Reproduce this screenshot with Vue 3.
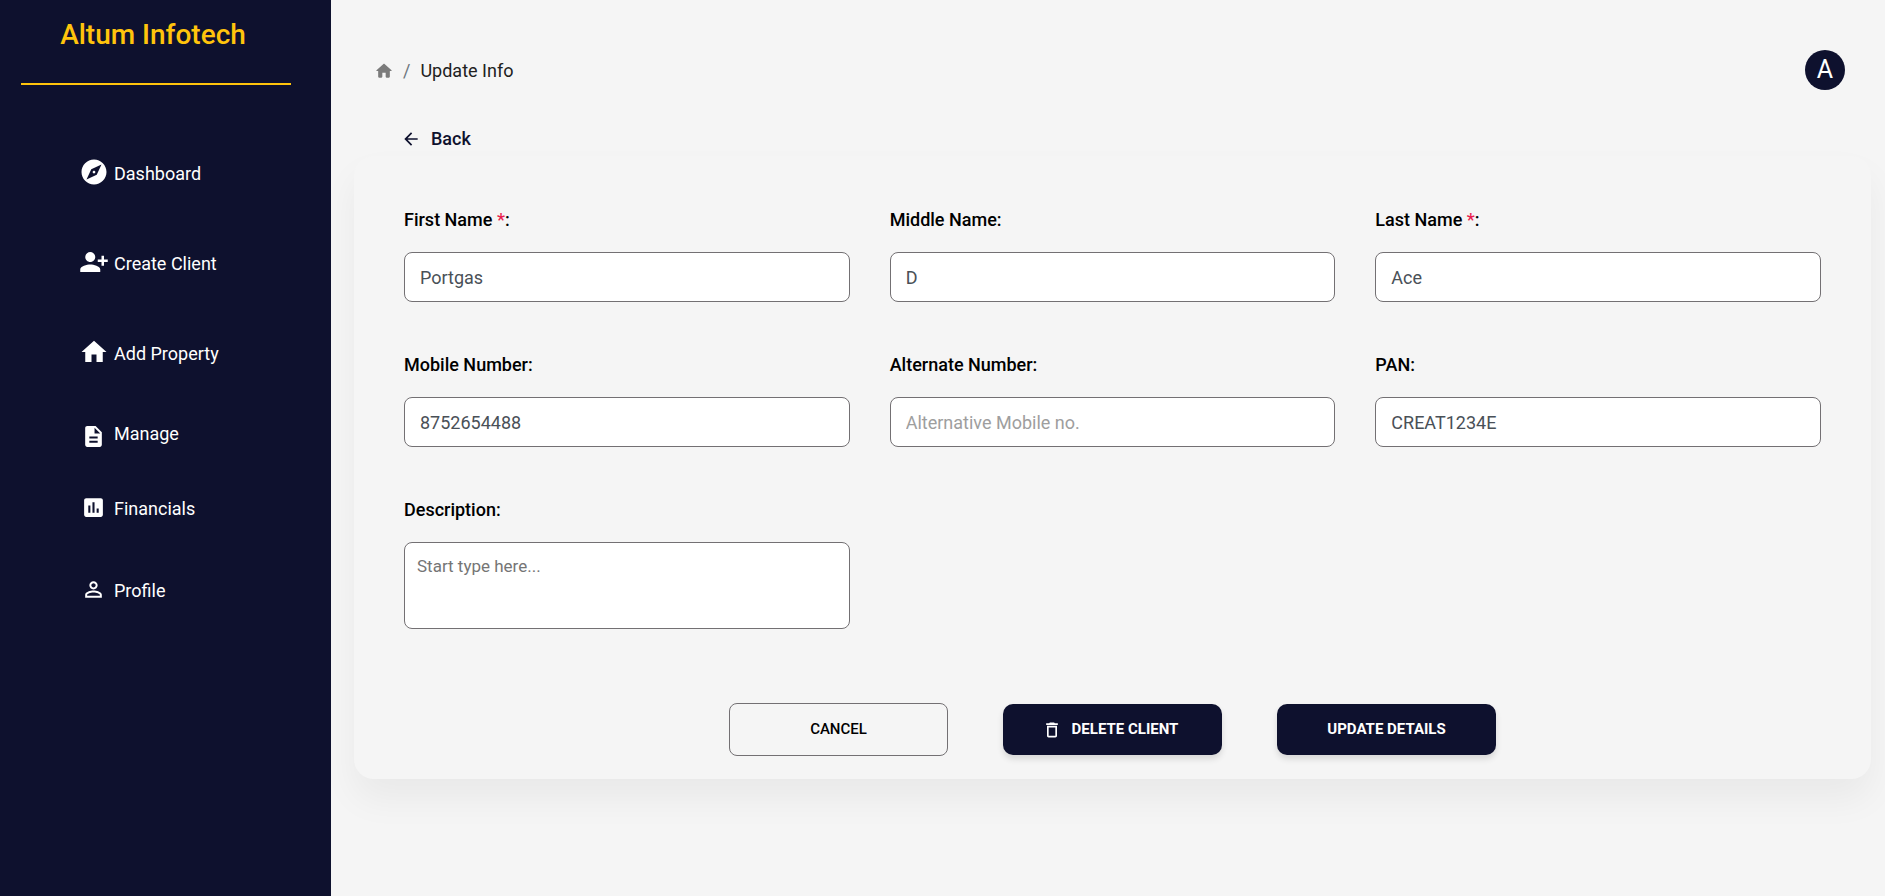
<script setup>
import { ref } from 'vue'

const navItems = [
  {
    label: 'Dashboard', size: 'large', gap: 'wide',
    icon: 'M12 10.9c-.61 0-1.1.49-1.1 1.1s.49 1.1 1.1 1.1c.61 0 1.1-.49 1.1-1.1s-.49-1.1-1.1-1.1zM12 2C6.48 2 2 6.48 2 12s4.48 10 10 10 10-4.48 10-10S17.52 2 12 2zm2.19 12.19L6 18l3.81-8.19L18 6l-3.81 8.19z',
  },
  {
    label: 'Create Client', size: 'large', gap: 'wide',
    icon: 'M13 8c0-2.21-1.79-4-4-4S5 5.79 5 8s1.79 4 4 4 4-1.79 4-4zm2 2v2h3v3h2v-3h3v-2h-3V7h-2v3h-3zM1 18v2h16v-2c0-2.66-5.33-4-8-4s-8 1.34-8 4z',
  },
  {
    label: 'Add Property', size: 'large', gap: 'medium',
    icon: 'M10 20v-6h4v6h5v-8h3L12 3 2 12h3v8z',
  },
  {
    label: 'Manage', size: 'small', gap: 'narrow', low: true,
    icon: 'M14 2H6c-1.1 0-1.99.9-1.99 2L4 20c0 1.1.89 2 1.99 2H18c1.1 0 2-.9 2-2V8l-6-6zm2 16H8v-2h8v2zm0-4H8v-2h8v2zm-3-5V3.5L18.5 9H13z',
  },
  {
    label: 'Financials', size: 'small', gap: 'loose',
    icon: 'M19 3H5c-1.1 0-2 .9-2 2v14c0 1.1.9 2 2 2h14c1.1 0 2-.9 2-2V5c0-1.1-.9-2-2-2zM9 17H7v-7h2v7zm4 0h-2V7h2v10zm4 0h-2v-4h2v4z',
  },
  {
    label: 'Profile', size: 'small', gap: 'medium',
    icon: 'M12 5.9c1.16 0 2.1.94 2.1 2.1s-.94 2.1-2.1 2.1S9.9 9.16 9.9 8s.94-2.1 2.1-2.1m0 9c2.97 0 6.1 1.46 6.1 2.1v1.1H5.9V17c0-.64 3.13-2.1 6.1-2.1M12 4C9.79 4 8 5.79 8 8s1.79 4 4 4 4-1.79 4-4-1.79-4-4-4zm0 9c-2.67 0-8 1.34-8 4v3h16v-3c0-2.66-5.33-4-8-4z',
  },
]

const fields = ref([
  { id: 'first-name', label: 'First Name', required: true, value: 'Portgas' },
  { id: 'middle-name', label: 'Middle Name', value: 'D' },
  { id: 'last-name', label: 'Last Name', required: true, value: 'Ace' },
  { id: 'mobile', label: 'Mobile Number', value: '8752654488' },
  { id: 'alternate', label: 'Alternate Number', value: '', placeholder: 'Alternative Mobile no.' },
  { id: 'pan', label: 'PAN', value: 'CREAT1234E' },
])
const description = ref('')
</script>

<template>
  <div class="layout">
    <aside class="sidebar">
      <h1 class="brand">Altum Infotech</h1>
      <hr class="rule" />
      <nav>
        <ul class="nav">
          <li v-for="item in navItems" :key="item.label" :class="item.gap">
            <a href="#" class="nav-link" :class="{ low: item.low }">
              <span class="nav-icon">
                <svg :class="item.size" viewBox="0 0 24 24" aria-hidden="true"><path :d="item.icon" /></svg>
              </span>
              <span class="nav-text">{{ item.label }}</span>
            </a>
          </li>
        </ul>
      </nav>
    </aside>

    <main class="main">
      <header class="topbar">
        <nav class="crumbs" aria-label="Breadcrumb">
          <a href="#" aria-label="Home" class="crumb-home">
            <svg viewBox="0 0 24 24" aria-hidden="true">
              <path d="M10 19v-5h4v5c0 .55.45 1 1 1h3c.55 0 1-.45 1-1v-7h1.7c.46 0 .68-.57.33-.87L12.67 3.6c-.38-.34-.96-.34-1.34 0l-8.36 7.53c-.34.3-.13.87.33.87H5v7c0 .55.45 1 1 1h3c.55 0 1-.45 1-1z" />
            </svg>
          </a>
          <span class="slash">/</span>
          <span>Update Info</span>
        </nav>
        <button type="button" class="avatar">A</button>
      </header>

      <a href="#" class="back">
        <svg viewBox="0 0 24 24" aria-hidden="true">
          <path d="M20 11H7.83l5.59-5.59L12 4l-8 8 8 8 1.41-1.41L7.83 13H20v-2z" />
        </svg>
        <span>Back</span>
      </a>

      <form class="card" @submit.prevent>
        <div class="fields">
          <div v-for="field in fields" :key="field.id" class="field">
            <label :for="field.id">{{ field.label }}<template v-if="field.required">&nbsp;<span class="star">*</span></template>:</label>
            <input :id="field.id" v-model="field.value" type="text" :placeholder="field.placeholder" />
          </div>
          <div class="field">
            <label for="description">Description:</label>
            <textarea id="description" v-model="description" placeholder="Start type here..."></textarea>
          </div>
        </div>
        <div class="actions">
          <button type="button" class="btn outline">CANCEL</button>
          <button type="button" class="btn solid with-icon">
            <svg viewBox="0 0 24 24" aria-hidden="true">
              <path d="M6 19c0 1.1.9 2 2 2h8c1.1 0 2-.9 2-2V7H6v12zM8 9h8v10H8V9zm7.5-5-1-1h-5l-1 1H5v2h14V4z" />
            </svg>
            <span>DELETE CLIENT</span>
          </button>
          <button type="submit" class="btn solid">UPDATE DETAILS</button>
        </div>
      </form>
    </main>
  </div>
</template>

<style>
body {
  margin: 0;
  background: #f5f5f5;
}
</style>

<style scoped>
.layout {
  display: flex;
  min-height: 100vh;
  font-family: Roboto, "Liberation Sans", sans-serif;
  font-size: 18px;
  line-height: 24px;
  color: #212121;
}

.layout * {
  box-sizing: border-box;
}

svg {
  display: block;
  fill: currentColor;
}

a {
  color: inherit;
  text-decoration: none;
}

.sidebar {
  position: relative;
  z-index: 1;
  flex: 0 0 331px;
  background: #0e112e;
  color: #fff;
}

.brand {
  margin: 16px 25px 0 0;
  padding-top: 3px;
  text-align: center;
  font-size: 28px;
  line-height: 32px;
  font-weight: 500;
  color: #ffc40c;
}

.rule {
  height: 2px;
  margin: 32px 40px 0 21px;
  border: 0;
  background: #ffc40c;
}

.nav {
  list-style: none;
  margin: 72px 0 0;
  padding: 0 0 0 79px;
}

.nav-link {
  display: flex;
  align-items: center;
  gap: 5px;
  height: 30px;
}

.nav-text {
  padding-top: 4px;
}

.wide {
  margin-bottom: 60px;
}

.loose {
  margin-bottom: 52px;
}

.medium {
  margin-bottom: 50px;
}

.narrow {
  margin-bottom: 45px;
}

.nav-icon {
  display: flex;
  flex: 0 0 30px;
  justify-content: center;
}

.low .nav-icon {
  padding-top: 8px;
}

.large {
  width: 30px;
  height: 30px;
}

.small {
  width: 25px;
  height: 25px;
  margin-right: 1px;
}

.main {
  flex: 1;
  min-width: 0;
  padding: 50px 14px 0 23px;
}

.topbar {
  display: flex;
  align-items: center;
  justify-content: space-between;
  padding: 0 26px 0 20px;
}

.crumbs {
  display: flex;
  align-items: center;
  padding-top: 1px;
}

.crumb-home {
  color: #7b7b7b;
}

.crumb-home svg {
  width: 20px;
  height: 20px;
}

.slash {
  margin: 0 10px 0 9px;
  color: #6c757d;
}

.avatar {
  width: 40px;
  height: 40px;
  padding: 0;
  border: 0;
  border-radius: 50%;
  background: #0e112e;
  color: #fff;
  font: 400 25px/40px Roboto, "Liberation Sans", sans-serif;
}

.back {
  display: inline-flex;
  align-items: center;
  gap: 10px;
  margin: 37px 0 0 47px;
  font-weight: 500;
  color: #0e112e;
  vertical-align: top;
}

.back svg {
  width: 20px;
  height: 20px;
}

.card {
  margin-top: 5px;
  padding: 52px 50px 23px;
  border-radius: 20px;
  background: #f5f5f5;
  box-shadow: 0 20px 36px rgba(0, 0, 0, 0.05);
}

.fields {
  display: grid;
  grid-template-columns: repeat(3, minmax(0, 1fr));
  gap: 51px 40px;
}

.field {
  display: flex;
  flex-direction: column;
  gap: 20px;
}

label {
  font-weight: 500;
  color: #000;
}

.star {
  color: #e91e4f;
}

input,
textarea {
  display: block;
  width: 100%;
  border: 1px solid #737073;
  border-radius: 8px;
  background: #fff;
  color: #495057;
  font-family: inherit;
}

input {
  height: 50px;
  padding: 0 15px;
  font-size: 18px;
}

input::placeholder {
  color: #9e9e9e;
}

textarea {
  height: 87px;
  padding: 11px 12px;
  font-size: 17px;
  line-height: 24px;
  resize: none;
}

textarea::placeholder {
  color: #757575;
}

.actions {
  display: flex;
  align-items: center;
  justify-content: center;
  gap: 55px;
  margin-top: 74px;
}

.btn {
  display: flex;
  align-items: center;
  justify-content: center;
  gap: 10px;
  width: 219px;
  height: 51px;
  padding: 0 0 2px;
  border: 0;
  border-radius: 10px;
  font-family: inherit;
  font-size: 15px;
  line-height: 20px;
}

.btn svg {
  width: 20px;
  height: 20px;
  margin-top: 2px;
}

.outline {
  height: 53px;
  border: 1px solid #737073;
  border-radius: 8px;
  background: transparent;
  color: #000;
  font-weight: 500;
}

.solid {
  background: #0e112e;
  color: #fff;
  font-weight: 700;
  box-shadow: 0 4px 6px rgba(0, 0, 0, 0.12);
}

.with-icon {
  padding-right: 5px;
}
</style>
